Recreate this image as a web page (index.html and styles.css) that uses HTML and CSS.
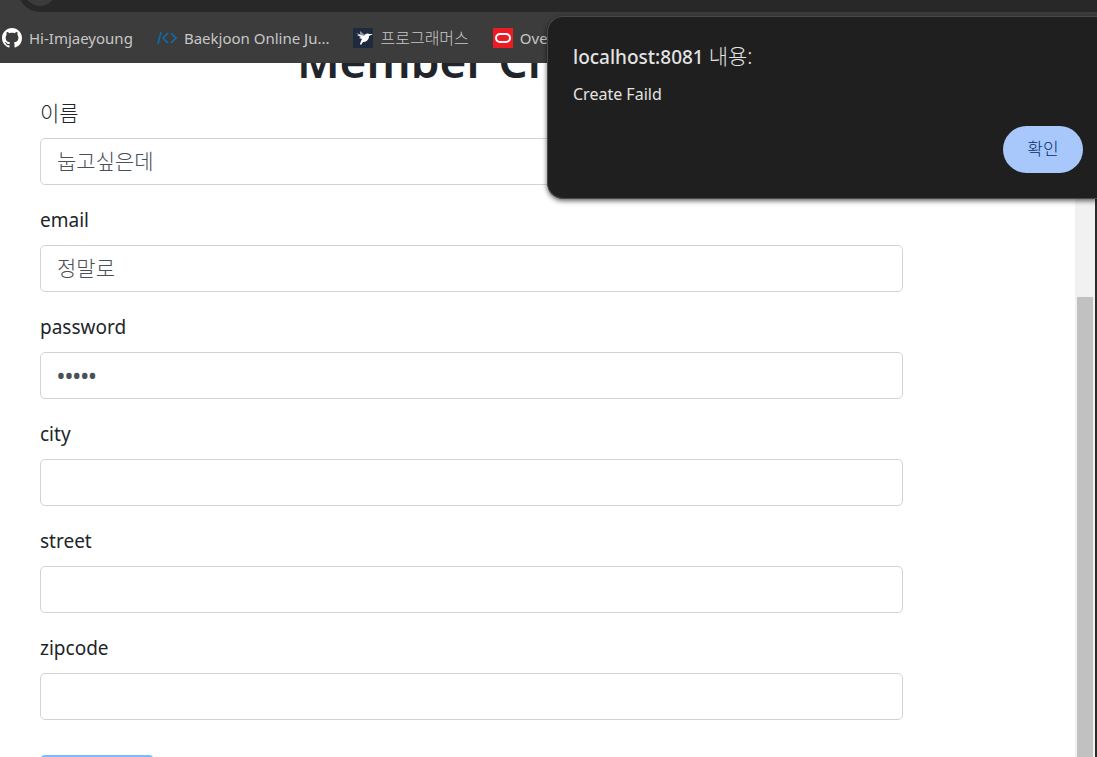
FILE: index.html
```html
<!DOCTYPE html>
<html lang="ko">
<head>
    <meta charset="UTF-8">
    <title>Member Create</title>
    <link rel="stylesheet" href="styles.css">
</head>
<body>
<div class="browser">
    <div class="toolbar">
        <div class="address-bar"><span class="site-info"></span></div>
    </div>
    <nav class="bookmarks">
        <a href="#">
            <svg width="20" height="20" viewBox="0 0 16 16"><path fill="#fff" d="M8 0C3.58 0 0 3.58 0 8c0 3.54 2.29 6.53 5.47 7.59.4.07.55-.17.55-.38 0-.19-.01-.82-.01-1.49-2.01.37-2.53-.49-2.69-.94-.09-.23-.48-.94-.82-1.13-.28-.15-.68-.52-.01-.53.63-.01 1.08.58 1.23.82.72 1.21 1.87.87 2.33.66.07-.52.28-.87.51-1.07-1.78-.2-3.64-.89-3.64-3.95 0-.87.31-1.59.82-2.15-.08-.2-.36-1.02.08-2.12 0 0 .67-.21 2.2.82.64-.18 1.32-.27 2-.27s1.36.09 2 .27c1.53-1.04 2.2-.82 2.2-.82.44 1.1.16 1.92.08 2.12.51.56.82 1.27.82 2.15 0 3.07-1.87 3.75-3.65 3.95.29.25.54.73.54 1.48 0 1.07-.01 1.93-.01 2.2 0 .21.15.46.55.38A8.01 8.01 0 0 0 16 8c0-4.42-3.58-8-8-8z"/></svg>
            Hi-Imjaeyoung
        </a>
        <a href="#">
            <svg width="20" height="20" viewBox="0 0 20 20" fill="none" stroke="#0f6cab" stroke-width="1.6"><path d="M4 4L1 16M11 5L6 10l5 5M14 5l5 5-5 5"/></svg>
            Baekjoon Online Ju...
        </a>
        <a href="#" class="korean">
            <svg width="20" height="20" viewBox="0 0 20 20"><rect width="20" height="20" rx="1" fill="#1e2a3e"/><path fill="#8d96a3" d="M7 3l5 4-1 2-4-3z"/><path fill="#fff" d="M3 5l8 3c1-2 3-3 5-2h4l-4 2c0 4-3 6-6 6l-2 3-1-1 1-3 1-2-3-1 2-1-4-2h2z"/></svg>
            프로그래머스
        </a>
        <a href="#">
            <svg width="20" height="20" viewBox="0 0 20 20"><rect width="20" height="20" fill="#ed1c24"/><rect x="3" y="6" width="14" height="8" rx="4" fill="none" stroke="#fff" stroke-width="2"/></svg>
            Overview
        </a>
    </nav>
    <div class="viewport">
        <main class="page">
            <h1>Member Create</h1>
            <form>
                <div class="form-group">
                    <label for="name" class="korean">이름</label>
                    <input type="text" id="name" value="눕고싶은데">
                </div>
                <div class="form-group">
                    <label for="email">email</label>
                    <input type="text" id="email" value="정말로">
                </div>
                <div class="form-group">
                    <label for="password">password</label>
                    <input type="password" id="password" value="12345">
                </div>
                <div class="form-group">
                    <label for="city">city</label>
                    <input type="text" id="city">
                </div>
                <div class="form-group">
                    <label for="street">street</label>
                    <input type="text" id="street">
                </div>
                <div class="form-group">
                    <label for="zipcode">zipcode</label>
                    <input type="text" id="zipcode">
                </div>
                <button type="submit" class="btn-submit">Submit</button>
            </form>
        </main>
        <div class="scrollbar"><div class="thumb"></div></div>
    </div>
</div>
<div class="alert" role="alertdialog" aria-labelledby="alert-title">
    <h2 id="alert-title">localhost:8081 <span class="korean">내용:</span></h2>
    <p>Create Faild</p>
    <button type="button">확인</button>
</div>
</body>
</html>
```
FILE: styles.css
```css
* {
    box-sizing: border-box;
}

body {
    margin: 0;
    font-family: "Noto Sans", "Noto Sans CJK KR", sans-serif;
    font-size: 19px;
    line-height: 30px;
    color: #212529;
    background-color: #fff;
}

.browser {
    display: flex;
    flex-direction: column;
    height: 100vh;
    overflow: hidden;
}

.toolbar {
    flex: none;
    height: 12px;
    padding-left: 18px;
    overflow: hidden;
    display: flex;
    align-items: flex-end;
    background-color: #3c3c3c;
}

.address-bar {
    flex: 1;
    display: flex;
    align-items: center;
    height: 44px;
    padding-left: 6px;
    border-radius: 22px 0 0 22px;
    background-color: #282828;
}

.site-info {
    width: 32px;
    height: 32px;
    border-radius: 50%;
    background-color: #3c3c3c;
}

.bookmarks {
    flex: none;
    display: flex;
    align-items: center;
    gap: 24px;
    height: 51px;
    padding-left: 2px;
    background-color: #3c3c3c;
}

.bookmarks a {
    display: flex;
    align-items: center;
    gap: 7px;
    font-size: 15px;
    color: #c7c7c7;
    text-decoration: none;
    white-space: nowrap;
}

.bookmarks .korean {
    font-size: 16px;
    font-weight: 300;
}

.viewport {
    flex: 1;
    min-height: 0;
    display: flex;
    border-right: 2px solid #2b2b2b;
}

.page {
    flex: 1;
    overflow: hidden;
    padding: 0 172px 0 40px;
}

/* the page is scrolled, only the bottom of the heading shows */
h1 {
    margin: -32px 0 9px;
    font-size: 46px;
    font-weight: 600;
    line-height: 58px;
    text-align: center;
}

.form-group {
    margin-bottom: 20px;
}

.form-group label {
    display: block;
    margin-bottom: 10px;
}

.form-group .korean {
    font-size: 21px;
    font-weight: 300;
}

.form-group input {
    display: block;
    width: 100%;
    height: 47px;
    padding: 0 16px 4px;
    border: 1px solid #ced4da;
    border-radius: 5px;
    font: inherit;
    font-size: 21px;
    font-weight: 300;
    color: #495057;
    background-color: #fff;
}

.form-group input[type="password"] {
    padding-bottom: 0;
    font-weight: 600;
}

.btn-submit {
    width: 114px;
    height: 48px;
    margin-top: 15px;
    border: 0;
    border-radius: 5px;
    font: inherit;
    color: #fff;
    background-color: #7abaff;
}

.scrollbar {
    width: 20px;
    padding: 234px 2px 0;
    background-color: #f1f1f1;
}

.thumb {
    height: 100%;
    background-color: #c1c1c1;
}

.alert {
    position: absolute;
    top: 16px;
    right: 0;
    width: 550px;
    display: flex;
    flex-direction: column;
    padding: 26px 14px 25px 25px;
    border: 1px solid #4a4a4a;
    border-right: 0;
    border-radius: 16px 0 0 16px;
    box-shadow: 0 2px 5px rgba(0, 0, 0, 0.6);
    color: #e3e3e3;
    background-color: #1f1f1f;
}

.alert h2 {
    margin: 0;
    font-size: 19px;
    font-weight: 500;
    line-height: 28px;
}

.alert .korean {
    font-size: 21px;
    font-weight: 300;
    line-height: 20px;
}

.alert p {
    margin: 9px 0 18px;
    font-size: 16px;
    line-height: 28px;
}

.alert button {
    align-self: flex-end;
    width: 80px;
    height: 47px;
    padding-bottom: 3px;
    border: 0;
    border-radius: 24px;
    font: inherit;
    font-size: 17px;
    font-weight: 300;
    color: #062e6f;
    background-color: #a8c7fa;
}
```
